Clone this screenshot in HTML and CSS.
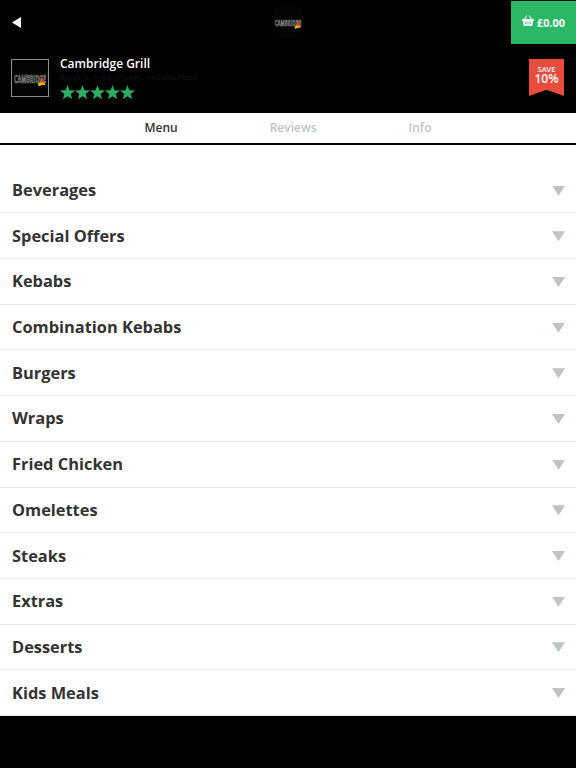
FILE: index.html
```html
<!DOCTYPE html>
<html lang="en">
<head>
    <meta charset="UTF-8">
    <meta name="viewport" content="width=device-width, initial-scale=1.0">
    <title>Cambridge Grill</title>
    <link rel="stylesheet" href="styles.css">
</head>
<body>
    <svg class="symbols" width="0" height="0">
        <symbol id="logo" viewBox="0 0 36 36">
            <rect width="36" height="36" fill="#030505"/>
            <text x="2" y="22.500" font-size="10" font-weight="700" textLength="32" lengthAdjust="spacingAndGlyphs" fill="#222" stroke="#959595" stroke-width="0.7">CAMBRIDGE</text>
            <path d="M30 17l3 6h-6z" fill="#e0402a"/>
            <path d="M26 22.500h4v2.500l-3.500 1.500z" fill="#d9c318"/>
            <path d="M29.500 22.500H33V25h-3.500z" fill="#c9b51c"/>
        </symbol>
        <symbol id="star" viewBox="0 0 24 24">
            <path d="M12 0l3.100 8.300 8.900.4-7 5.500 2.400 8.600-7.400-4.900-7.400 4.900L7 14.200 0 8.700l8.900-.4z"/>
        </symbol>
    </svg>

    <header>
        <a class="back" href="#">
            <svg width="9" height="11" viewBox="0 0 9 11"><path d="M9 0v11L0 5.500z" fill="#fff"/></svg>
        </a>
        <svg class="header-logo"><use href="#logo"/></svg>
        <a class="basket" href="#">
            <svg width="12" height="11" viewBox="0 0 24 22">
                <path d="M4 9L10 1.200M20 9L14 1.200" stroke="#fff" stroke-width="2.200" fill="none"/>
                <path d="M0 8h24v3.500h-1.500L20.500 22h-17L1.500 11.500H0z" fill="#fff"/>
                <path d="M7.500 13v6M12 13v6M16.500 13v6" stroke="#2ab866" stroke-width="1.800"/>
            </svg>
            <span>£0.00</span>
        </a>
    </header>

    <section class="restaurant">
        <svg class="restaurant-logo"><use href="#logo"/></svg>
        <div class="details">
            <h1>Cambridge Grill</h1>
            <p>Burgers, Fried Chicken, Kebabs, Pizza</p>
            <div class="stars">
                <svg><use href="#star"/></svg>
                <svg><use href="#star"/></svg>
                <svg><use href="#star"/></svg>
                <svg><use href="#star"/></svg>
                <svg><use href="#star"/></svg>
            </div>
        </div>
        <div class="ribbon">
            <span class="save">SAVE</span>
            <span class="percent">10%</span>
        </div>
    </section>

    <nav>
        <a class="active" href="#">Menu</a>
        <a href="#">Reviews</a>
        <a href="#">Info</a>
    </nav>

    <main>
        <ul class="menu">
            <li>Beverages</li>
            <li>Special Offers</li>
            <li>Kebabs</li>
            <li>Combination Kebabs</li>
            <li>Burgers</li>
            <li>Wraps</li>
            <li>Fried Chicken</li>
            <li>Omelettes</li>
            <li>Steaks</li>
            <li>Extras</li>
            <li>Desserts</li>
            <li>Kids Meals</li>
        </ul>
    </main>
</body>
</html>
```
FILE: styles.css
```css
* {
    box-sizing: border-box;
}
body {
    font-family: 'Open Sans', sans-serif;
    margin: 0;
    background-color: #000;
    color: #333;
}
a {
    text-decoration: none;
}
.symbols {
    display: block;
}
symbol text {
    font-family: 'Open Sans', sans-serif;
}
header {
    display: grid;
    grid-template-columns: 1fr 30px 1fr;
    align-items: center;
    height: 44px;
}
.back {
    display: flex;
    padding-left: 12px;
}
.header-logo {
    width: 30px;
    height: 30px;
}
.basket {
    display: flex;
    justify-self: end;
    align-items: center;
    justify-content: center;
    gap: 3px;
    width: 65px;
    height: 43px;
    background-color: #2ab866;
    color: #fff;
    font-size: 10.800px;
    font-weight: 700;
}
.basket svg {
    margin-bottom: 3px;
}
.restaurant {
    display: flex;
    height: 69px;
    padding: 15px 12px 0 11px;
}
.restaurant-logo {
    width: 38px;
    height: 38px;
    border: 1px solid #8c8c8c;
}
.details {
    flex: 1;
    padding-left: 11px;
}
.details h1 {
    margin: -4px 0 0;
    color: #fff;
    font-size: 12px;
    line-height: 17px;
    font-weight: 600;
}
.details p {
    margin: 0;
    color: #151515;
    font-size: 7.900px;
    line-height: 11px;
}
.stars {
    display: flex;
    margin-top: 2px;
}
.stars svg {
    width: 15px;
    height: 15px;
    fill: #2aae62;
}
.ribbon {
    display: flex;
    flex-direction: column;
    align-items: center;
    width: 35px;
    height: 37px;
    padding-top: 5px;
    background-color: #e84c3d;
    clip-path: polygon(0 0, 100% 0, 100% 100%, 50% 83%, 0 100%);
    color: #fff;
    font-weight: 600;
}
.save {
    font-size: 7.500px;
    line-height: 10px;
}
.percent {
    font-size: 12px;
    line-height: 10px;
}
nav {
    display: flex;
    justify-content: center;
    gap: 92px;
    height: 32px;
    padding-top: 6px;
    background-color: #fff;
    border-bottom: 2px solid #000;
    font-size: 12px;
    line-height: 17px;
    font-weight: 600;
}
nav a {
    color: #bdc3c7;
}
nav .active {
    color: #333;
}
main {
    padding-top: 22.800px;
    background-color: #fff;
}
.menu {
    margin: 0;
    padding: 0;
    list-style: none;
}
.menu li {
    display: flex;
    align-items: center;
    justify-content: space-between;
    height: 45.680px;
    padding: 0 11px 1px 12px;
    border-bottom: 1px solid #e8e8e8;
    font-size: 16.400px;
    font-weight: 700;
}
.menu li::after {
    content: "";
    width: 13px;
    height: 10px;
    margin-top: 2px;
    background-color: #bdc3c7;
    clip-path: polygon(0 0, 100% 0, 50% 100%);
}
```
